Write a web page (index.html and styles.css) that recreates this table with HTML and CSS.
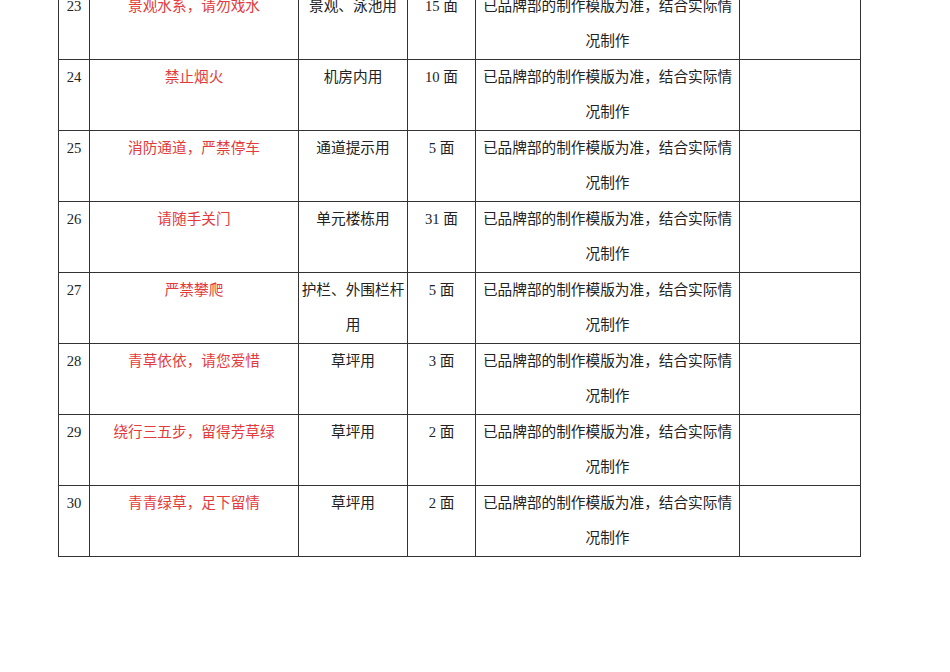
FILE: index.html
```html
<!DOCTYPE html>
<html lang="zh">
<head>
<meta charset="utf-8">
<link rel="stylesheet" href="styles.css">
</head>
<body>
<table class="sheet">
<colgroup>
<col class="c-no"><col class="c-name"><col class="c-use"><col class="c-qty"><col class="c-note"><col class="c-extra">
</colgroup>
<tbody>
<tr><td class="no">23</td><td class="name">景观水系，请勿戏水</td><td class="use">景观、泳池用</td><td>15 面</td><td class="note">已品牌部的制作模版为准，结合实际情况制作</td><td></td></tr>
<tr><td class="no">24</td><td class="name">禁止烟火</td><td class="use">机房内用</td><td>10 面</td><td class="note">已品牌部的制作模版为准，结合实际情况制作</td><td></td></tr>
<tr><td class="no">25</td><td class="name">消防通道，严禁停车</td><td class="use">通道提示用</td><td>5 面</td><td class="note">已品牌部的制作模版为准，结合实际情况制作</td><td></td></tr>
<tr><td class="no">26</td><td class="name">请随手关门</td><td class="use">单元楼栋用</td><td>31 面</td><td class="note">已品牌部的制作模版为准，结合实际情况制作</td><td></td></tr>
<tr><td class="no">27</td><td class="name">严禁攀爬</td><td class="use">护栏、外围栏杆用</td><td>5 面</td><td class="note">已品牌部的制作模版为准，结合实际情况制作</td><td></td></tr>
<tr><td class="no">28</td><td class="name">青草依依，请您爱惜</td><td class="use">草坪用</td><td>3 面</td><td class="note">已品牌部的制作模版为准，结合实际情况制作</td><td></td></tr>
<tr><td class="no">29</td><td class="name">绕行三五步，留得芳草绿</td><td class="use">草坪用</td><td>2 面</td><td class="note">已品牌部的制作模版为准，结合实际情况制作</td><td></td></tr>
<tr><td class="no">30</td><td class="name">青青绿草，足下留情</td><td class="use">草坪用</td><td>2 面</td><td class="note">已品牌部的制作模版为准，结合实际情况制作</td><td></td></tr>
</tbody>
</table>
</body>
</html>
```
FILE: styles.css
```css
html, body {
  margin: 0;
  padding: 0;
  background: #fff;
}
body {
  font-family: "Liberation Serif", "Noto Sans CJK SC", serif;
  font-size: 14.67px;
  color: #222;
}
.sheet {
  border-collapse: collapse;
  table-layout: fixed;
  margin: -12px 0 0 58px;
  width: 802px;
}
.c-no { width: 31px; }
.c-name { width: 209px; }
.c-use { width: 109px; }
.c-qty { width: 68px; }
.c-note { width: 264px; }
.c-extra { width: 121px; }
.sheet td {
  border: 1px solid #333;
  height: 70px;
  padding: 0 3px;
  line-height: 35px;
  vertical-align: top;
  text-align: center;
  box-sizing: border-box;
}
.sheet td.no {
  padding: 0;
}
.sheet td.name {
  color: #e33b3b;
}
.sheet td.use {
  padding: 0 2px;
}
.sheet td.note {
  padding: 0 2px;
}
```
